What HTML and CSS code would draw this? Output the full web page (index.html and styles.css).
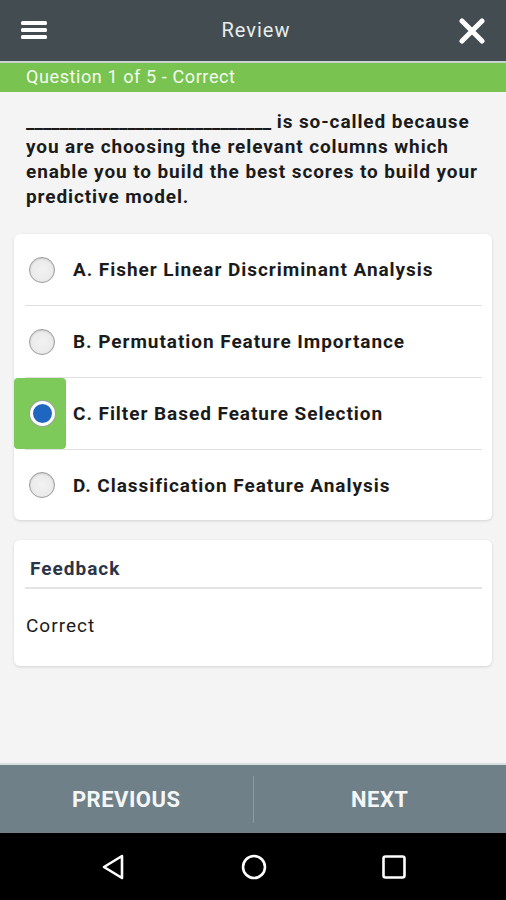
FILE: index.html
```html
<!DOCTYPE html>
<html>
<head>
<meta charset="utf-8">
<link rel="stylesheet" href="styles.css">
</head>
<body>
<div class="app">
  <header class="topbar">
    <svg class="menu" width="26" height="22" viewBox="0 0 26 22"><rect x="0" y="1" width="26" height="4" rx="1.5" fill="#fff"/><rect x="0" y="8" width="26" height="4" rx="1.5" fill="#fff"/><rect x="0" y="15" width="26" height="4" rx="1.5" fill="#fff"/></svg>
    <div class="title">Review</div>
    <svg class="close" width="26" height="26" viewBox="0 0 26 26"><path d="M3 3 L23 23 M23 3 L3 23" stroke="#fff" stroke-width="5" stroke-linecap="round"/></svg>
  </header>
  <div class="status">Question 1 of 5 - Correct</div>
  <main class="content">
    <p class="question"><span class="blank">_____________________________</span><span class="qtext"> is so-called because you are choosing the relevant columns which enable you to build the best scores to build your predictive model.</span></p>
    <div class="card options">
      <div class="option"><span class="mark"><span class="radio"></span></span><span class="label">A. Fisher Linear Discriminant Analysis</span></div>
      <div class="option"><span class="mark"><span class="radio"></span></span><span class="label">B. Permutation Feature Importance</span></div>
      <div class="option selected"><span class="mark"><span class="radio checked"></span></span><span class="label">C. Filter Based Feature Selection</span></div>
      <div class="option"><span class="mark"><span class="radio"></span></span><span class="label">D. Classification Feature Analysis</span></div>
    </div>
    <div class="card feedback">
      <div class="fb-head">Feedback</div>
      <div class="fb-body">Correct</div>
    </div>
  </main>
  <footer class="navbtns">
    <div class="btn">PREVIOUS</div>
    <div class="sep"></div>
    <div class="btn">NEXT</div>
  </footer>
  <div class="sysnav">
    <svg width="26" height="28" viewBox="0 0 26 28"><path d="M22 3 L4 14 L22 25 Z" fill="none" stroke="#fff" stroke-width="2.6" stroke-linejoin="round"/></svg>
    <svg width="28" height="28" viewBox="0 0 28 28"><circle cx="14" cy="14" r="11" fill="none" stroke="#fff" stroke-width="2.6"/></svg>
    <svg width="26" height="26" viewBox="0 0 26 26"><rect x="2.5" y="2.5" width="21" height="21" rx="2" fill="none" stroke="#fff" stroke-width="2.6"/></svg>
  </div>
</div>
</body>
</html>
```
FILE: styles.css
```css
* { box-sizing: border-box; }
html, body { margin: 0; padding: 0; }
body { font-family: Roboto, "Liberation Sans", Arial, sans-serif; background: #f4f4f4; }
.app { width: 506px; height: 900px; display: flex; flex-direction: column; background: #f4f4f4; }
.topbar {
  height: 63px; background: #434d51; border-bottom: 2px solid #c9d2cf;
  display: flex; align-items: center; justify-content: space-between;
  padding: 0 21px 1px 21px;
}
.menu { margin-top: 1px; }
.title { color: #e8eceb; font-size: 20px; letter-spacing: 1px; margin-left: 6px; }
.close { margin-top: 1px; }
.status {
  height: 29px; background: #79c350; color: #f4fbef;
  font-size: 18px; letter-spacing: 0.6px; padding-left: 26px; line-height: 28px;
}
.content { flex: 1; padding: 17px 14px 0 14px; }
.question {
  margin: 0 0 0 12px; font-size: 19px; font-weight: 700; line-height: 25px;
  color: #1b1b1b; padding-right: 4px;
}
.qtext { letter-spacing: 0.9px; }
.blank { letter-spacing: 0; }
.card {
  background: #fff; border-radius: 6px;
  box-shadow: 0 1px 3px rgba(0,0,0,0.14);
}
.options { margin-top: 25px; padding: 0 10px 0 0; }
.option {
  height: 72px; display: flex; align-items: center;
  border-bottom: 1px solid #e0e0e0; margin-left: 11px;
}
.option:last-child { border-bottom: none; height: 70px; }
.mark { height: 100%; display: flex; align-items: center; margin-left: -11px; padding-left: 17px; width: 59px; }
.option.selected .mark { background: #7dc95a; border-radius: 4px; width: 52px; margin-right: 7px; }
.radio {
  width: 26px; height: 26px; border-radius: 50%;
  border: 1.5px solid #9b9b9b; background: radial-gradient(circle, #f2f2f2 0%, #e6e6e6 100%);
  box-shadow: inset 0 1px 2px rgba(0,0,0,0.12); display: block; margin-left: -2px;
}
.radio.checked {
  background: #1f66c1; border: 3px solid #fff; box-shadow: 0 0 0 1px #9aa59a;
  width: 25px; height: 25px; margin-left: -1px;
}
.label { font-size: 19px; letter-spacing: 0.95px; font-weight: 700; color: #1b1b1b; }
.feedback { margin-top: 20px; height: 126px; padding: 0 10px 0 11px; }
.fb-head {
  height: 49px; border-bottom: 2px solid #e4e4e4;
  font-size: 19px; letter-spacing: 1px; font-weight: 700; color: #2c3548; padding: 17px 0 0 5px;
}
.fb-body { font-size: 19px; letter-spacing: 1px; color: #1b1b1b; padding: 25px 0 0 1px; }
.navbtns {
  height: 70px; background: #6f8089; border-top: 2px solid #d7dfe1;
  display: flex; align-items: center;
}
.btn { flex: 1; text-align: center; color: #f5f7f7; font-size: 22px; letter-spacing: 0.5px; font-weight: 700; }
.sep { width: 1px; height: 47px; background: #8b9ba3; }
.sysnav {
  height: 67px; background: #000; display: flex; align-items: center;
  justify-content: space-between; padding: 0 99px 0 100px;
}
```
